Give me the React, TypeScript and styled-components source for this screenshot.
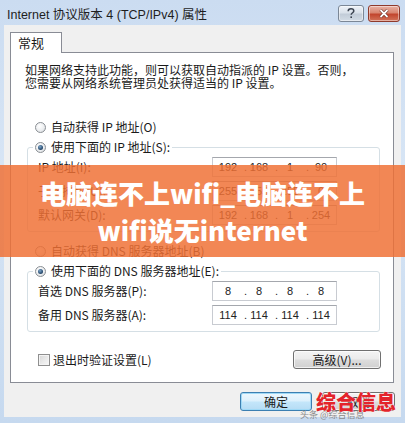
import React from 'react';
import styled, { createGlobalStyle } from 'styled-components';

const GlobalStyle = createGlobalStyle`
  html, body {
    margin: 0;
    padding: 0;
  }
  body {
    width: 405px;
    height: 423px;
    overflow: hidden;
    font-family: "Noto Sans CJK SC", "Liberation Sans", sans-serif;
    color: #1a1a1a;
  }
`;

const Window = styled.div`
  position: relative;
  width: 405px;
  height: 423px;
  box-sizing: border-box;
  display: flex;
  flex-direction: column;
  padding: 0 4px 6px;
  background: linear-gradient(180deg, #cbdcf1 0%, #d7e5f5 40%, #c6d9ef 100%);
  overflow: hidden;
`;

const TitleBar = styled.div`
  height: 25px;
  display: flex;
  align-items: flex-start;
  padding-left: 3px;
  box-sizing: border-box;
`;

const Title = styled.div`
  flex: 1;
  padding-top: 7px;
  font-family: "Liberation Sans", "Noto Sans CJK SC", sans-serif;
  font-size: 12.5px;
  line-height: 16px;
  color: #1e1e1e;
`;

const CaptionButtons = styled.div`
  display: flex;
  gap: 4px;
  margin-top: 5px;
  margin-right: 1px;
`;

const CaptionButton = styled.div<{ $close?: boolean }>`
  width: ${(p) => (p.$close ? '32px' : '26px')};
  height: 17px;
  box-sizing: border-box;
  border: 1px solid ${(p) => (p.$close ? '#8f3a2c' : '#7b8796')};
  border-radius: 3px;
  display: flex;
  align-items: center;
  justify-content: center;
  background: ${(p) =>
    p.$close
      ? 'linear-gradient(180deg, #e8b2a4 0%, #d98671 45%, #c2462e 55%, #d2735a 100%)'
      : 'linear-gradient(180deg, #eef2f7 0%, #d9e1ea 45%, #c2ccd8 55%, #d3dce6 100%)'};
  box-shadow: inset 0 0 0 1px rgba(255, 255, 255, 0.45);
`;

const Body = styled.div`
  flex: 1;
  display: flex;
  flex-direction: column;
  background: #f0f0f0;
  padding: 7px 7px 0 6px;
`;

const Tab = styled.div`
  position: relative;
  z-index: 1;
  width: 52px;
  height: 21px;
  box-sizing: border-box;
  margin-bottom: -1px;
  border: 1px solid #898c95;
  border-bottom: none;
  background: #fff;
  font-size: 13px;
  line-height: 19px;
  padding-left: 7px;
`;

const Panel = styled.div`
  display: flex;
  flex-direction: column;
  background: #fff;
  border: 1px solid #898c95;
  padding: 10px 0 13px;
  font-size: 12px;
`;

const Intro = styled.p`
  margin: 0;
  padding-left: 14px;
  line-height: 13px;
`;

const OptionRow = styled.div<{ $top: number }>`
  display: flex;
  align-items: center;
  gap: 5px;
  height: 14px;
  line-height: 14px;
  margin: ${(p) => p.$top}px 0 0 24px;
`;

const Radio = styled.span<{ $checked?: boolean }>`
  position: relative;
  width: 11px;
  height: 11px;
  box-sizing: border-box;
  border-radius: 50%;
  border: 1px solid #8a8f94;
  background: radial-gradient(circle at 40% 35%, #ffffff 0%, #eceef0 55%, #cdd1d5 100%);
  flex-shrink: 0;

  &::after {
    content: '';
    display: ${(p) => (p.$checked ? 'block' : 'none')};
    position: absolute;
    left: 2px;
    top: 2px;
    width: 5px;
    height: 5px;
    border-radius: 50%;
    background: radial-gradient(circle at 40% 35%, #7ea6c9 0%, #2b4f74 60%, #1b2f45 100%);
  }
`;

const Group = styled.fieldset<{ $top: number }>`
  margin: ${(p) => p.$top}px 13px 0 16px;
  padding: 0 0 6px;
  border: 1px solid #d5dfe5;
  border-radius: 3px;
  min-width: 0;
`;

const Caption = styled.legend`
  margin-left: 5px;
  padding: 0 2px;
  display: flex;
  align-items: center;
  gap: 5px;
  height: 14px;
  line-height: 14px;
`;

const Fields = styled.div`
  display: grid;
  grid-template-columns: 174px 125px;
  row-gap: 4px;
  align-items: center;
  margin-top: 3px;
  padding-left: 10px;
`;

const FieldLabel = styled.span`
  line-height: 20px;
`;

const AddressBox = styled.div`
  height: 20px;
  box-sizing: border-box;
  display: flex;
  align-items: center;
  padding-left: 3px;
  border: 1px solid #c8cbd1;
  border-top-color: #a4a7ad;
  background: #fff;
  font-family: "Liberation Sans", sans-serif;
  font-size: 11px;
  color: #222;
`;

const Octet = styled.span`
  width: 24px;
  text-align: center;
`;

const Dot = styled.span`
  width: 7px;
  text-align: right;
`;

const BottomRow = styled.div`
  display: flex;
  align-items: center;
  justify-content: space-between;
  margin-top: 18px;
  padding: 0 12px 0 27px;
`;

const CheckLabel = styled.div`
  display: flex;
  align-items: center;
  gap: 3px;
  line-height: 14px;
`;

const Checkbox = styled.span`
  width: 12px;
  height: 12px;
  box-sizing: border-box;
  border: 1px solid #8f8f8f;
  background: linear-gradient(135deg, #d6d6d6 0%, #ececec 60%, #f8f8f8 100%);
  box-shadow: inset 0 0 0 1px #f4f4f4;
`;

const Button = styled.div<{ $width: number; $default?: boolean }>`
  width: ${(p) => p.$width}px;
  height: 19px;
  box-sizing: border-box;
  display: flex;
  align-items: center;
  justify-content: center;
  border: 1px solid ${(p) => (p.$default ? '#3c7fb1' : '#707070')};
  border-radius: 3px;
  font-size: 12px;
  background: ${(p) =>
    p.$default
      ? 'linear-gradient(180deg, #edf7fd 0%, #dcf0fc 48%, #c4e6fa 52%, #b6dcf4 100%)'
      : 'linear-gradient(180deg, #f4f4f4 0%, #ebebeb 48%, #dddddd 52%, #d0d0d0 100%)'};
  box-shadow: inset 0 0 0 1px ${(p) => (p.$default ? '#9fd9f6' : 'rgba(255,255,255,0.7)')};
`;

const Footer = styled.div`
  display: flex;
  justify-content: flex-end;
  gap: 10px;
  padding-top: 9px;
  margin-right: -1px;
`;

const Banner = styled.div`
  position: absolute;
  left: 0;
  right: 0;
  top: 165px;
  height: 92px;
  display: flex;
  flex-direction: column;
  align-items: center;
  justify-content: center;
  background: rgba(239, 112, 52, 0.84);
  color: #fff;
  font-family: "Noto Sans CJK SC", "Liberation Sans", sans-serif;
  font-weight: 900;
  font-size: 26px;
  line-height: 37px;
  text-align: center;
`;

const Watermark = styled.div`
  position: absolute;
  left: 316px;
  top: 390px;
  font-family: "Noto Sans CJK SC", sans-serif;
  font-weight: 900;
  font-size: 20px;
  line-height: 24px;
  color: #e3242b;
  text-shadow: 0 0 1px #fff, 0 0 1px #fff;
`;

const Credit = styled.div`
  position: absolute;
  left: 300px;
  top: 409px;
  font-family: "Noto Sans CJK SC", sans-serif;
  font-size: 9px;
  line-height: 11px;
  color: #8a8a8a;
`;

const IpAddress: React.FC<{ value: string }> = ({ value }) => {
  const parts = value.split('.');
  return (
    <AddressBox>
      {parts.map((part, i) => (
        <React.Fragment key={i}>
          {i > 0 && <Dot>.</Dot>}
          <Octet>{part}</Octet>
        </React.Fragment>
      ))}
    </AddressBox>
  );
};

const App: React.FC = () => {
  return (
    <>
      <GlobalStyle />
      <Window>
        <TitleBar>
          <Title>Internet 协议版本 4 (TCP/IPv4) 属性</Title>
          <CaptionButtons>
            <CaptionButton>
              <svg width="8" height="11" viewBox="0 0 8 11">
                <path
                  d="M1.2 3.2 C1.2 1.4 2.4 0.8 4 0.8 C5.6 0.8 6.8 1.6 6.8 3 C6.8 4.6 4.2 4.9 4.2 6.8"
                  fill="none"
                  stroke="#3b4350"
                  strokeWidth="1.5"
                />
                <rect x="3.4" y="8.4" width="1.6" height="1.6" fill="#3b4350" />
              </svg>
            </CaptionButton>
            <CaptionButton $close>
              <svg width="10" height="9" viewBox="0 0 10 9">
                <path d="M1.5 1 L8.5 8 M8.5 1 L1.5 8" stroke="#5a1e14" strokeWidth="3" />
                <path d="M1.5 1 L8.5 8 M8.5 1 L1.5 8" stroke="#ffffff" strokeWidth="1.8" />
              </svg>
            </CaptionButton>
          </CaptionButtons>
        </TitleBar>

        <Body>
          <Tab>常规</Tab>
          <Panel>
            <Intro>
              如果网络支持此功能，则可以获取自动指派的 IP 设置。否则，
              <br />
              您需要从网络系统管理员处获得适当的 IP 设置。
            </Intro>

            <OptionRow $top={31}>
              <Radio />
              自动获得 IP 地址(O)
            </OptionRow>

            <Group $top={6}>
              <Caption>
                <Radio $checked />
                使用下面的 IP 地址(S):
              </Caption>
              <Fields>
                <FieldLabel>IP 地址(I):</FieldLabel>
                <IpAddress value="192.168.1.90" />
                <FieldLabel>子网掩码(U):</FieldLabel>
                <IpAddress value="255.255.255.0" />
                <FieldLabel>默认网关(D):</FieldLabel>
                <IpAddress value="192.168.1.254" />
              </Fields>
            </Group>

            <OptionRow $top={12}>
              <Radio />
              自动获得 DNS 服务器地址(B)
            </OptionRow>

            <Group $top={6}>
              <Caption>
                <Radio $checked />
                使用下面的 DNS 服务器地址(E):
              </Caption>
              <Fields>
                <FieldLabel>首选 DNS 服务器(P):</FieldLabel>
                <IpAddress value="8.8.8.8" />
                <FieldLabel>备用 DNS 服务器(A):</FieldLabel>
                <IpAddress value="114.114.114.114" />
              </Fields>
            </Group>

            <BottomRow>
              <CheckLabel>
                <Checkbox />
                退出时验证设置(L)
              </CheckLabel>
              <Button $width={88}>高级(V)...</Button>
            </BottomRow>
          </Panel>

          <Footer>
            <Button $width={72} $default>
              确定
            </Button>
            <Button $width={73}>取消</Button>
          </Footer>
        </Body>

        <Banner>
          <div>电脑连不上wifi_电脑连不上</div>
          <div>wifi说无internet</div>
        </Banner>
        <Credit>头条 @综合信息</Credit>
        <Watermark>综合信息</Watermark>
      </Window>
    </>
  );
};

export default App;
